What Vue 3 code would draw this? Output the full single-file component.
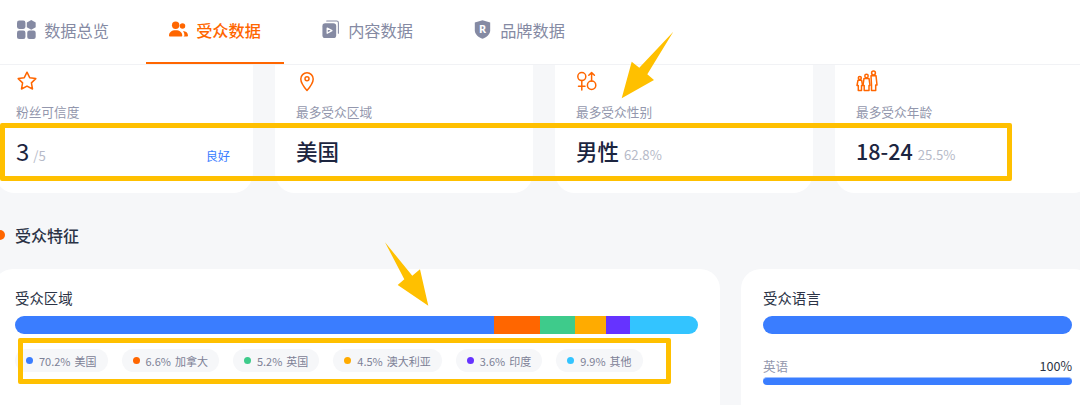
<template>
  <div class="page">
    <nav class="tabs">
      <div v-for="tab in tabs" :key="tab.id" class="tab" :class="{ active: tab.id === 'audience' }">
        <svg v-if="tab.id === 'overview'" class="tab-icon" viewBox="0 0 18 18" fill="currentColor">
          <rect x="0" y="0.5" width="8" height="8" rx="2" />
          <path d="M13.5 0 17.7 2.3v4.6L13.5 9.2 9.3 6.9V2.3z" />
          <rect x="0" y="10" width="8" height="8" rx="2" />
          <rect x="9.7" y="10" width="8" height="8" rx="2" />
        </svg>
        <svg v-else-if="tab.id === 'audience'" class="tab-icon" viewBox="0 0 20 18" fill="currentColor">
          <circle cx="7" cy="4.500" r="3.900" />
          <path d="M0 15.500c0-3.800 2.800-5.800 7-5.800s7 2 7 5.800c0 .5-.3.8-.8.8H.8c-.5 0-.8-.3-.8-.8z" />
          <circle cx="14.200" cy="5.300" r="2.900" />
          <path d="M15.200 16.300h3.900c.5 0 .9-.3.9-.8 0-3-2-4.900-5.300-5 1 1.200 1.500 2.800 1.500 4.500 0 .5-.3 1-1 1.300z" />
        </svg>
        <svg v-else-if="tab.id === 'content'" class="tab-icon" viewBox="0 0 18 20">
          <path d="M5 1h10.500A1.800 1.800 0 0 1 17.300 2.800V14" fill="none" stroke="currentColor" stroke-width="1.100" stroke-linecap="round" />
          <rect x="0.500" y="3.500" width="14.500" height="15.500" rx="3" fill="currentColor" />
          <path d="M5.500 8.500 10.500 11.200 5.500 14z" fill="none" stroke="#fff" stroke-width="1.300" stroke-linejoin="round" />
        </svg>
        <svg v-else class="tab-icon" viewBox="0 0 18 21">
          <path d="M9 0.300 17.500 2.800V11.500C17.500 16 13 19.200 9 20.700 5 19.200 0.500 16 0.500 11.500V2.800z" fill="currentColor" />
          <text x="9" y="14.300" text-anchor="middle" class="shield-letter">R</text>
        </svg>
        <span>{{ tab.label }}</span>
      </div>
    </nav>

    <section class="stats">
      <div v-for="stat in stats" :key="stat.id" class="stat-card">
        <svg v-if="stat.id === 'fans'" class="stat-icon" viewBox="0 0 22 22">
          <path d="M11 2.200 13.700 7.700 19.800 8.600 15.400 12.900 16.500 19 11 16.100 5.500 19 6.600 12.900 2.200 8.600 8.300 7.700z" />
        </svg>
        <svg v-else-if="stat.id === 'region'" class="stat-icon" viewBox="0 0 22 22">
          <path d="M11 20.500C7.500 16.500 4.800 12.800 4.800 9a6.200 6.200 0 0 1 12.400 0c0 3.800-2.700 7.500-6.200 11.500z" />
          <circle cx="11" cy="8.800" r="2" />
        </svg>
        <svg v-else-if="stat.id === 'gender'" class="stat-icon" viewBox="0 0 22 22">
          <circle cx="5.800" cy="6.600" r="4" />
          <path d="M5.800 10.600V20M2.500 16.300H9" />
          <circle cx="15.600" cy="15.200" r="4.200" />
          <path d="M15.600 11V2.500M12.800 5.300 15.600 2.500 18.400 5.300" />
        </svg>
        <svg v-else class="stat-icon" viewBox="0 0 22 22">
          <circle cx="3.800" cy="8" r="1.500" />
          <path d="M2 10.200h3.600l1 5.300H5.500V20.500H2.300V15.500H1z" />
          <circle cx="10.500" cy="6" r="1.700" />
          <path d="M8 8.400h5l1 7H13V20.500H8.200V15.400H7z" />
          <circle cx="17.500" cy="3" r="1.900" />
          <path d="M15 5.700h5l1 9.300H19.700V20.500H15.500V15z" />
        </svg>
        <div class="stat-label">{{ stat.label }}</div>
        <div class="stat-value">
          <strong :class="{ score: stat.id === 'fans' }">{{ stat.value }}</strong>
          <span class="stat-sub">{{ stat.sub }}</span>
          <span v-if="stat.tag" class="stat-tag">{{ stat.tag }}</span>
        </div>
      </div>
    </section>

    <h2 class="section-title">受众特征</h2>

    <section class="panels">
      <div class="panel">
        <h3>受众区域</h3>
        <div class="stack-bar">
          <span
            v-for="item in regions"
            :key="item.name"
            :style="{ width: item.pct + '%', background: item.color }"
          ></span>
        </div>
        <div class="chips">
          <div v-for="item in regions" :key="item.name + item.pct" class="chip">
            <i :style="{ background: item.color }"></i>
            <span>{{ item.pct }}%</span>
            <span>{{ item.name }}</span>
          </div>
        </div>
      </div>

      <div class="panel">
        <h3>受众语言</h3>
        <div class="stack-bar"><span class="full"></span></div>
        <div class="lang-row">
          <span>英语</span>
          <b>100%</b>
        </div>
        <div class="lang-bar"></div>
      </div>
    </section>

    <!-- hand-drawn annotations on top of the screenshot -->
    <div class="mark mark-stats"></div>
    <div class="mark mark-chips"></div>
    <svg class="arrows" viewBox="0 0 1080 405">
      <polygon points="673.300,31.700 647.300,74.300 654,80 621.700,98.300 631.700,61.700 639.300,67.700" />
      <polygon points="385,242.300 412.300,275.700 420,269.300 428.300,305.700 397.700,285 404.300,279.300" />
    </svg>
  </div>
</template>

<script setup>
const tabs = [
  { id: 'overview', label: '数据总览' },
  { id: 'audience', label: '受众数据' },
  { id: 'content', label: '内容数据' },
  { id: 'brand', label: '品牌数据' }
]

const stats = [
  { id: 'fans', label: '粉丝可信度', value: '3', sub: '/5', tag: '良好' },
  { id: 'region', label: '最多受众区域', value: '美国', sub: '' },
  { id: 'gender', label: '最多受众性别', value: '男性', sub: '62.8%' },
  { id: 'age', label: '最多受众年龄', value: '18-24', sub: '25.5%' }
]

const regions = [
  { name: '美国', pct: 70.2, color: '#3a7dff' },
  { name: '加拿大', pct: 6.6, color: '#ff6600' },
  { name: '英国', pct: 5.2, color: '#3ecb8b' },
  { name: '澳大利亚', pct: 4.5, color: '#ffab00' },
  { name: '印度', pct: 3.6, color: '#6633ff' },
  { name: '其他', pct: 9.9, color: '#33c4ff' }
]
</script>

<style>
html,
body {
  margin: 0;
  overflow: hidden;
  background: #f6f7f9;
}
</style>

<style scoped>
.page {
  position: relative;
  width: 1080px;
  height: 405px;
  overflow: hidden;
  background: #f6f7f9;
  color: #1c2540;
  font-family: "Noto Sans CJK SC", "Noto Sans", sans-serif;
}

.tabs {
  display: flex;
  gap: 14px;
  height: 64px;
  background: #fff;
  border-bottom: 1px solid #f1f2f5;
}

.tab {
  position: relative;
  display: flex;
  align-items: center;
  justify-content: center;
  gap: 8px;
  width: 138px;
  height: 64px;
  box-sizing: border-box;
  padding-bottom: 5px;
  color: #858aa3;
  font-size: 16.200px;
}

.tab:first-child {
  margin-left: -6px;
}

.tab.active {
  color: #ff6600;
  font-weight: 500;
}

.tab.active::after {
  content: "";
  position: absolute;
  left: 0;
  right: 0;
  bottom: 0;
  height: 2px;
  background: #ff6600;
}

.tab-icon {
  width: 19px;
  height: 19px;
  flex: none;
}

.shield-letter {
  fill: #fff;
  font-size: 12px;
  font-weight: 700;
  font-family: "Noto Sans", sans-serif;
}

.stats {
  display: flex;
  gap: 22px;
  margin-left: -5px;
}

.stat-card {
  flex: none;
  width: 258px;
  height: 128px;
  box-sizing: border-box;
  padding: 5px 21px 0;
  background: #fff;
  border-radius: 0 0 20px 20px;
}

.stat-icon {
  display: block;
  width: 22px;
  height: 22px;
  fill: none;
  stroke: #ff6600;
  stroke-width: 1.500;
  stroke-linejoin: round;
  stroke-linecap: round;
}

.stat-label {
  margin-top: 10px;
  color: #9397ad;
  font-size: 12.700px;
  line-height: 20px;
}

.stat-value {
  display: flex;
  align-items: baseline;
  gap: 5px;
  margin-top: 13px;
  height: 32px;
  line-height: 32px;
}

.stat-value strong {
  font-size: 21.500px;
  font-weight: 500;
  color: #1c2540;
}

.stat-value strong.score {
  font-size: 24px;
  font-weight: 400;
  margin-right: -1px;
}

.stat-sub {
  color: #b6bac8;
  font-size: 13.200px;
}

.stat-tag {
  margin-left: auto;
  margin-right: 2px;
  color: #3a7dff;
  font-size: 12.200px;
}

.section-title {
  position: relative;
  margin: 0;
  padding-left: 15px;
  height: 76px;
  line-height: 84px;
  font-size: 16px;
  font-weight: 500;
  color: #2b3346;
}

.section-title::before {
  content: "";
  position: absolute;
  left: -5px;
  top: 37px;
  width: 10px;
  height: 10px;
  border-radius: 50%;
  background: #ff6600;
}

.panels {
  display: flex;
  gap: 21px;
  margin-left: -7px;
}

.panel {
  flex: none;
  box-sizing: border-box;
  width: 727px;
  height: 180px;
  padding: 19px 22px 0;
  background: #fff;
  border-radius: 20px;
}

.panel + .panel {
  width: 353px;
}

h3 {
  margin: 0;
  font-size: 14.400px;
  font-weight: 400;
  line-height: 20px;
  color: #2b3346;
}

.stack-bar {
  display: flex;
  height: 18px;
  margin-top: 8px;
  border-radius: 9px;
  overflow: hidden;
}

.stack-bar .full {
  width: 100%;
  background: #3a7dff;
}

.chips {
  display: flex;
  gap: 14px;
  margin-top: 15px;
}

.chip {
  display: flex;
  align-items: center;
  gap: 4px;
  height: 23px;
  padding: 0 11px;
  border-radius: 12px;
  background: #f6f7f9;
  color: #7d8196;
  font-size: 11px;
  white-space: nowrap;
}

.chip i {
  width: 7px;
  height: 7px;
  margin-right: 2px;
  border-radius: 50%;
}

.lang-row {
  display: flex;
  justify-content: space-between;
  margin-top: 22px;
  font-size: 12.600px;
  line-height: 20px;
  color: #9397ad;
}

.lang-row b {
  font-weight: 400;
  color: #2b3346;
}

.lang-bar {
  height: 7px;
  margin-top: 1px;
  border-radius: 4px;
  background: #3a7dff;
  border-top: 1px solid #9dbfff;
}

.mark {
  position: absolute;
  box-sizing: border-box;
  border: 5px solid #ffc000;
  border-radius: 2px;
  pointer-events: none;
}

.mark-stats {
  left: 0;
  top: 123px;
  width: 1012px;
  height: 58px;
}

.mark-chips {
  left: 18px;
  top: 338px;
  width: 653px;
  height: 46px;
}

.arrows {
  position: absolute;
  left: 0;
  top: 0;
  width: 1080px;
  height: 405px;
  fill: #ffc000;
  pointer-events: none;
}
</style>
